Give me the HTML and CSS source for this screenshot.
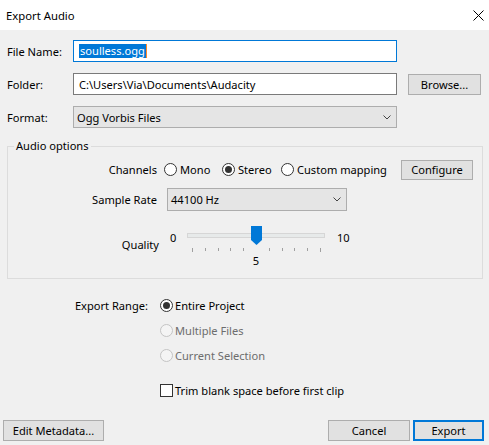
FILE: index.html
```html
<!DOCTYPE html>
<html>
<head>
<meta charset="utf-8">
<title>Export Audio</title>
<link rel="stylesheet" href="styles.css">
</head>
<body>
<div class="titlebar">
  <span class="title">Export Audio</span>
  <svg class="close" width="11" height="11" viewBox="0 0 11 11"><path d="M0.5 0.5L10.5 10.5M10.5 0.5L0.5 10.5" stroke="#000" stroke-width="1" fill="none"/></svg>
</div>
<div class="content">
  <div class="row row-file">
    <span class="lbl">File Name:</span>
    <div class="field focus"><span class="seltext">soulless.ogg</span><span class="caret"></span></div>
  </div>
  <div class="row row-folder">
    <span class="lbl">Folder:</span>
    <div class="field">C:\Users\Via\Documents\Audacity</div>
    <div class="btn browse">Browse...</div>
  </div>
  <div class="row row-format">
    <span class="lbl">Format:</span>
    <div class="select fmt"><span>Ogg Vorbis Files</span><svg class="chev" width="8" height="5" viewBox="0 0 8 5"><path d="M0.5 0.5L4 4L7.5 0.5" stroke="#444" stroke-width="1" fill="none"/></svg></div>
  </div>

  <fieldset class="group">
    <legend>Audio options</legend>
    <div class="grow row-ch">
      <span class="glbl">Channels</span>
      <span class="ritem r-mono"><span class="radio"></span>Mono</span>
      <span class="ritem r-stereo"><span class="radio on"></span>Stereo</span>
      <span class="ritem r-custom"><span class="radio"></span>Custom mapping</span>
      <div class="btn configure">Configure</div>
    </div>
    <div class="grow row-sr">
      <span class="glbl">Sample Rate</span>
      <div class="select sr"><span>44100 Hz</span><svg class="chev" width="8" height="5" viewBox="0 0 8 5"><path d="M0.5 0.5L4 4L7.5 0.5" stroke="#444" stroke-width="1" fill="none"/></svg></div>
    </div>
    <div class="grow row-q">
      <span class="q-lbl">Quality</span>
      <span class="q-min">0</span>
      <div class="slider">
        <div class="track"></div>
        <div class="ticks">
          <span class="tick end"></span><span class="tick"></span><span class="tick"></span><span class="tick"></span><span class="tick"></span><span class="tick hid"></span><span class="tick"></span><span class="tick"></span><span class="tick"></span><span class="tick"></span><span class="tick end"></span>
        </div>
        <svg class="thumb" width="11" height="19" viewBox="0 0 11 19"><path d="M0 0H11V14L5.5 19L0 14Z" fill="#0078d7"/></svg>
        <span class="q-val">5</span>
      </div>
      <span class="q-max">10</span>
    </div>
  </fieldset>

  <div class="range">
    <span class="range-lbl">Export Range:</span>
    <div class="range-opts">
      <span class="ropt"><span class="radio on"></span>Entire Project</span>
      <span class="ropt disabled"><span class="radio dis"></span>Multiple Files</span>
      <span class="ropt disabled"><span class="radio dis"></span>Current Selection</span>
    </div>
  </div>

  <div class="trim">
    <span class="check"></span>Trim blank space before first clip
  </div>

  <div class="footer">
    <div class="btn edit">Edit Metadata...</div>
    <div class="spacer"></div>
    <div class="btn cancel">Cancel</div>
    <div class="btn export">Export</div>
  </div>
</div>
</body>
</html>
```
FILE: styles.css
```css
* { box-sizing: border-box; }

body {
  margin: 0;
  width: 489px;
  height: 445px;
  overflow: hidden;
  background: #f0f0f0;
  font-family: "Noto Sans", "Open Sans", sans-serif;
  font-size: 11.1px;
  color: #000;
}

.titlebar {
  height: 30px;
  background: #fff;
  display: flex;
  align-items: center;
  justify-content: space-between;
  padding: 0 5px 0 6px;
}

.title { font-size: 11.3px; }

.row {
  display: flex;
  align-items: center;
  padding-left: 7px;
  height: 22px;
}

.row-file { margin-top: 10px; }
.row-folder { margin-top: 11px; }
.row-format { margin-top: 11px; }

.lbl { width: 66px; }

.field {
  width: 324px;
  height: 22px;
  background: #fff;
  border: 1px solid #7a7a7a;
  padding-left: 5px;
  display: flex;
  align-items: center;
  white-space: nowrap;
}

.field.focus { border-color: #0078d7; }

.seltext {
  background: #0078d7;
  color: #fff;
  height: 14px;
  line-height: 14px;
  padding: 0 1px 0 1px;
}

.caret {
  width: 1px;
  height: 14px;
  background: #ff8728;
}

.btn {
  background: #e1e1e1;
  border: 1px solid #adadad;
  height: 21px;
  display: flex;
  align-items: center;
  justify-content: center;
  white-space: nowrap;
}

.browse { margin-left: 11px; width: 73px; }

.select {
  background: #e5e5e5;
  border: 1px solid #adadad;
  display: flex;
  align-items: center;
  justify-content: space-between;
  padding: 0 5px 0 3px;
}

.fmt { width: 324px; height: 22px; }

.group {
  margin: 10px 6px 0 7px;
  padding: 0 0 9px 0;
  border: 1px solid #dcdcdc;
  min-width: 0;
}

.group legend {
  margin-left: 6px;
  padding: 0 2px;
  line-height: 16px;
}

.grow {
  display: flex;
  align-items: center;
}

.glbl {
  width: 149px;
  text-align: right;
}

.row-ch { margin-top: 5px; height: 21px; }

.ritem {
  display: flex;
  align-items: center;
  white-space: nowrap;
}

.r-mono { margin-left: 7px; width: 58px; }
.r-stereo { width: 59px; }
.r-custom { width: 120px; }

.radio {
  width: 13px;
  height: 13px;
  border: 1px solid #333;
  border-radius: 50%;
  background: #fff;
  margin-right: 3px;
  display: flex;
  align-items: center;
  justify-content: center;
  flex: none;
}

.radio.on::after {
  content: "";
  width: 7px;
  height: 7px;
  border-radius: 50%;
  background: #333;
}

.radio.dis {
  border-color: #c4c4c4;
  background: #f4f4f4;
}

.configure { width: 72px; height: 20px; }

.row-sr { margin-top: 8px; height: 23px; }

.sr { margin-left: 10px; width: 180px; height: 23px; }

.row-q {
  margin-top: 15px;
  height: 43px;
  align-items: flex-start;
}

.q-lbl {
  width: 151px;
  text-align: right;
  margin-top: 11px;
  line-height: 16px;
}

.q-min {
  margin-left: 11px;
  width: 17px;
  margin-top: 4px;
  line-height: 16px;
}

.slider {
  position: relative;
  width: 138px;
  height: 43px;
}

.track {
  position: absolute;
  left: 0;
  right: 0;
  top: 7px;
  height: 5px;
  background: #e7eaea;
  border: 1px solid #d6d6d6;
}

.ticks {
  position: absolute;
  left: 5px;
  top: 22px;
  width: 129px;
  height: 5px;
  display: flex;
  justify-content: space-between;
  align-items: flex-start;
}

.tick {
  width: 1px;
  height: 3px;
  background: #a0a0a0;
}

.tick.end { height: 4px; }
.tick.hid { visibility: hidden; }

.thumb {
  position: absolute;
  left: 64px;
  top: 0;
}

.q-val {
  position: absolute;
  left: 0;
  right: 0;
  top: 27px;
  text-align: center;
  line-height: 16px;
}

.q-max {
  margin-left: 12px;
  margin-top: 4px;
  line-height: 16px;
}

.range {
  display: flex;
  margin-top: 14px;
}

.range-lbl {
  width: 148px;
  margin-right: 12px;
  text-align: right;
  height: 25px;
  line-height: 25px;
}

.range-opts {
  display: flex;
  flex-direction: column;
}

.ropt {
  height: 25px;
  display: flex;
  align-items: center;
}

.ropt .radio { margin-right: 2px; }

.disabled { color: #6d6d6d; }

.trim {
  margin-top: 14px;
  height: 16px;
  padding-left: 160px;
  display: flex;
  align-items: center;
}

.check {
  width: 13px;
  height: 13px;
  border: 1px solid #333;
  background: #fff;
  margin-right: 2px;
}

.footer {
  margin-top: 22px;
  display: flex;
  padding: 0 5px 0 3px;
}

.footer .btn { height: 21px; }

.edit { width: 101px; }
.spacer { flex: 1; }
.cancel { width: 82px; }
.export {
  width: 71px;
  margin-left: 3px;
  border: 2px solid #0078d7;
}
```
